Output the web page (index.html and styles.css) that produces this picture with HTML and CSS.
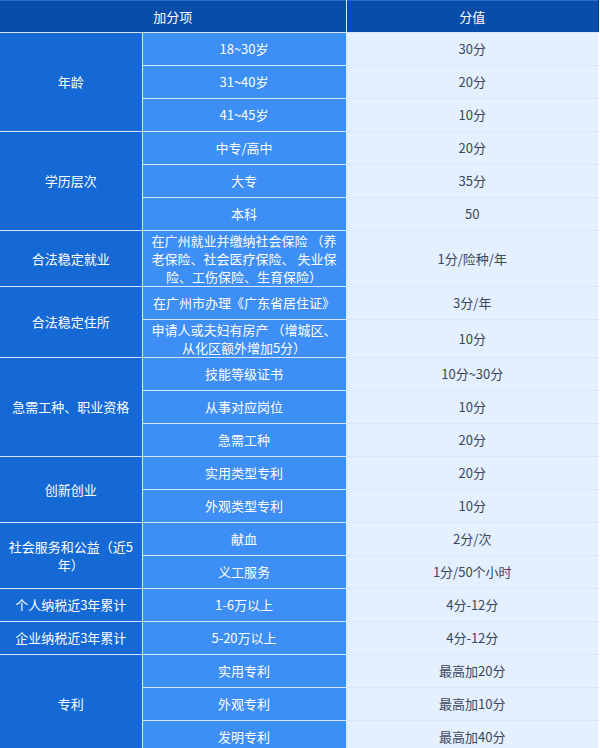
FILE: index.html
```html
<!DOCTYPE html>
<html lang="zh-CN">
<head>
<meta charset="utf-8">
<title>加分项</title>
<link rel="stylesheet" href="styles.css">
</head>
<body>
<table class="score">
  <colgroup>
    <col class="c1"><col class="c2"><col class="c3">
  </colgroup>
  <thead>
    <tr><th colspan="2">加分项</th><th>分值</th></tr>
  </thead>
  <tbody>
    <tr><td class="cat" rowspan="3">年龄</td><td class="item">18~30岁</td><td class="val">30分</td></tr>
    <tr><td class="item">31~40岁</td><td class="val">20分</td></tr>
    <tr><td class="item">41~45岁</td><td class="val">10分</td></tr>

    <tr><td class="cat" rowspan="3">学历层次</td><td class="item">中专/高中</td><td class="val">20分</td></tr>
    <tr><td class="item">大专</td><td class="val">35分</td></tr>
    <tr><td class="item">本科</td><td class="val">50</td></tr>

    <tr class="multi"><td class="cat">合法稳定就业</td><td class="item nowrap">在广州就业并缴纳社会保险 （养<br>老保险、社会医疗保险、 失业保<br>险、工伤保险、生育保险）</td><td class="val">1分/险种/年</td></tr>

    <tr><td class="cat" rowspan="2">合法稳定住所</td><td class="item nowrap">在广州市办理《广东省居住证》</td><td class="val">3分/年</td></tr>
    <tr class="multi"><td class="item nowrap">申请人或夫妇有房产 （增城区、<br>从化区额外增加5分）</td><td class="val">10分</td></tr>

    <tr><td class="cat" rowspan="3">急需工种、职业资格</td><td class="item">技能等级证书</td><td class="val">10分~30分</td></tr>
    <tr><td class="item">从事对应岗位</td><td class="val">10分</td></tr>
    <tr><td class="item">急需工种</td><td class="val">20分</td></tr>

    <tr><td class="cat" rowspan="2">创新创业</td><td class="item">实用类型专利</td><td class="val">20分</td></tr>
    <tr><td class="item">外观类型专利</td><td class="val">10分</td></tr>

    <tr><td class="cat nowrap" rowspan="2">社会服务和公益（近5<br>年）</td><td class="item">献血</td><td class="val">2分/次</td></tr>
    <tr><td class="item">义工服务</td><td class="val">1分/50个小时</td></tr>

    <tr><td class="cat">个人纳税近3年累计</td><td class="item">1-6万以上</td><td class="val">4分-12分</td></tr>
    <tr><td class="cat">企业纳税近3年累计</td><td class="item">5-20万以上</td><td class="val">4分-12分</td></tr>

    <tr><td class="cat" rowspan="3">专利</td><td class="item">实用专利</td><td class="val">最高加20分</td></tr>
    <tr><td class="item">外观专利</td><td class="val">最高加10分</td></tr>
    <tr><td class="item">发明专利</td><td class="val">最高加40分</td></tr>
  </tbody>
</table>
</body>
</html>
```
FILE: styles.css
```css
html, body {
  margin: 0;
  padding: 0;
  background: #ffffff;
}

body {
  font-family: "Noto Sans CJK SC", "Noto Sans", sans-serif;
  font-size: 13px;
}

.score {
  width: 599px;
  border-collapse: collapse;
  table-layout: fixed;
  border-top: 1px solid #2f6cc2;
}

.c1 { width: 142px; }
.c2 { width: 204px; }

.score th,
.score td {
  text-align: center;
  vertical-align: middle;
  line-height: 18px;
  padding: 0 2px;
  border: 1px solid #d6e6fb;
}

.score th {
  height: 31px;
  background: #084da9;
  color: #ffffff;
  font-weight: normal;
  border-top: none;
  border-left: none;
}

.score th:last-child {
  border-right: 1px solid #0a3f8c;
}

.score td {
  height: 32px;
}

.score .nowrap {
  white-space: nowrap;
}

.score .cat {
  background: #1569d4;
  color: #ffffff;
  border-left: none;
}

.score .item {
  background: #3d8ef5;
  color: #ffffff;
}

.score .val {
  background: #e4f0fe;
  color: #3a4660;
  border-right: 1px solid #ffffff;
}

.score .multi td {
  padding-top: 1px;
  padding-bottom: 0;
}
```
